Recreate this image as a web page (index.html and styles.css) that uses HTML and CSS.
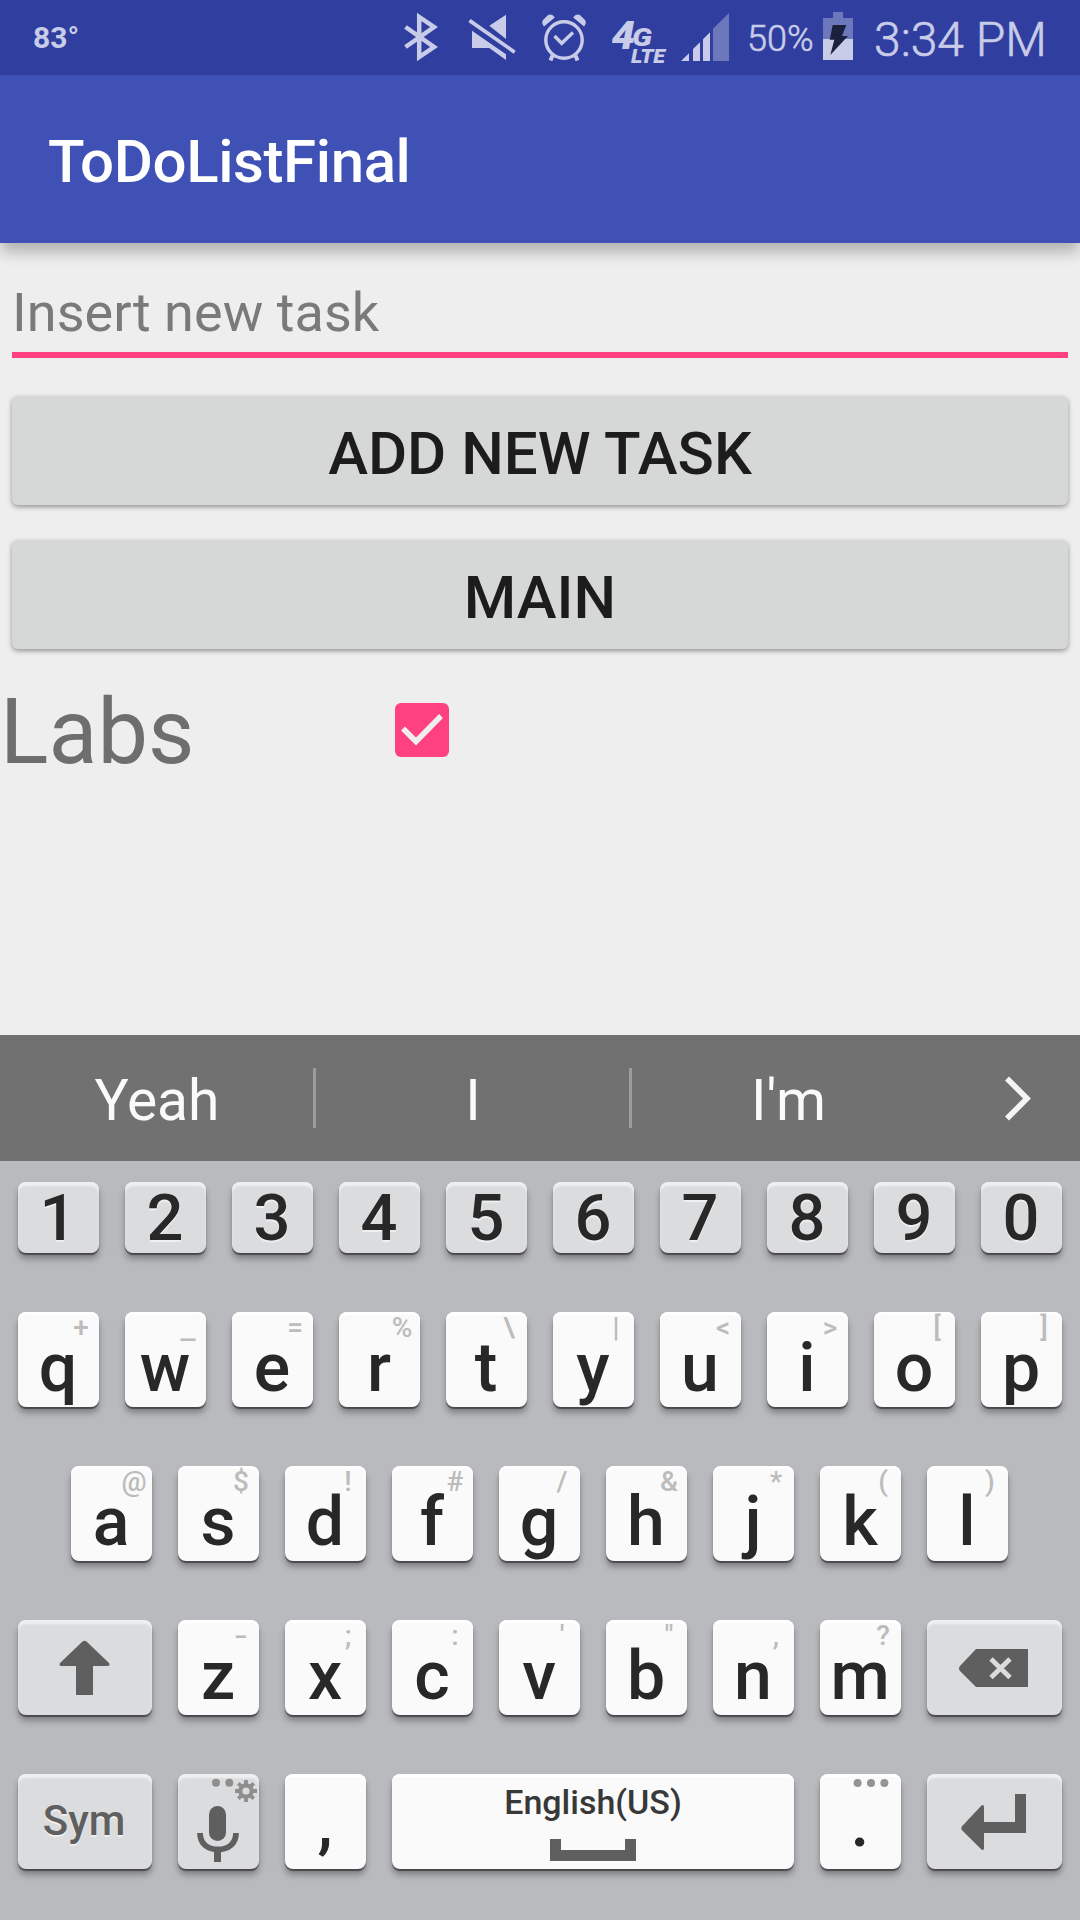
FILE: index.html
```html
<!DOCTYPE html>
<html lang="en">
<head>
<meta charset="utf-8">
<title>ToDoListFinal</title>
<link rel="stylesheet" href="styles.css">
</head>
<body>
<div class="screen">
  <header class="status">
    <span class="temp">83°</span>
    <svg class="ic-bt" width="36" height="75" viewBox="403 0 36 75"><path d="M405.500 47 434 27 419.200 17V57L434 47 405.500 27" fill="none" stroke="currentColor" stroke-width="4.500"/></svg>
    <svg class="ic-mute" width="48" height="75" viewBox="468 0 48 75"><path fill="currentColor" d="M470.700 19 515.700 50.700 513.700 53.700 468.300 22zM489.300 25.700 506 14.700V39zM472 30.700 506 54.300V60L489.300 48H472z"/></svg>
    <svg class="ic-alarm" width="46" height="75" viewBox="541 0 46 75"><g fill="none" stroke="currentColor"><circle cx="564" cy="40" r="18.200" stroke-width="3.400"/><path d="M554.500 36 561.700 43.300 573 32.500" stroke-width="3.400"/><path d="M552.500 55.500 550.500 60.500M575.500 55.500 577.500 60.500" stroke-width="4"/></g><path fill="currentColor" d="M544 26.500 554.800 17.500Q552 13 547.500 15.500L543 20Q541 23 544 26.500zM584 26.500 573.200 17.500Q576 13 580.500 15.500L585 20Q587 23 584 26.500z"/></svg>
    <svg class="ic-lte" width="56" height="75" viewBox="612 0 56 75" fill="currentColor"><text x="611.500" y="49" class="lte-4" textLength="23.500" lengthAdjust="spacingAndGlyphs">4</text><text x="632" y="45.500" class="lte-g" textLength="20" lengthAdjust="spacingAndGlyphs">G</text><text x="631" y="62.600" class="lte" textLength="34" lengthAdjust="spacingAndGlyphs">LTE</text></svg>
    <svg class="ic-signal" width="49" height="75" viewBox="681 0 49 75" fill="currentColor"><path d="M681 61 689 53.300V61zM693 61V49L700 42.300V61zM703 61V39.300L710 32.300V61z"/><path opacity=".4" d="M713 61V28.700L729 13V61z"/></svg>
    <span class="percent">50%</span>
    <svg class="ic-battery" width="30" height="75" viewBox="823 0 30 75"><path fill="currentColor" opacity=".4" d="M823 18H833V12H843V18H853V39H823z"/><path fill="currentColor" d="M823 39H853V60H823z"/><path fill="#1b203d" d="M832.700 25H846.300L842 36H848L830.300 55 834.300 39.700H829.700z"/></svg>
    <span class="clock">3:34 PM</span>
  </header>
  <div class="appbar"><h1>ToDoListFinal</h1></div>
  <main class="content">
    <div class="field"><span>Insert new task</span></div>
    <button class="btn">ADD NEW TASK</button>
    <button class="btn">MAIN</button>
    <div class="task">
      <span class="task-name">Labs</span>
      <svg width="54" height="54" viewBox="0 0 54 54"><rect width="54" height="54" rx="6" fill="#ff4081"/><path d="M8 25.500 21 38.500 46 13" fill="none" stroke="#eee" stroke-width="5.500"/></svg>
    </div>
  </main>
  <div class="suggest">
    <span>Yeah</span><span>I</span><span>I'm</span>
    <svg width="135" height="126" viewBox="945 1035 135 126"><path d="M1007 1078.500 1027 1098.500 1007 1118.500" fill="none" stroke="#f5f5f5" stroke-width="5.600"/></svg>
  </div>
  <div class="keyboard">
    <div class="row nums">
      <div class="key gray">1</div><div class="key gray">2</div><div class="key gray">3</div><div class="key gray">4</div><div class="key gray">5</div><div class="key gray">6</div><div class="key gray">7</div><div class="key gray">8</div><div class="key gray">9</div><div class="key gray">0</div>
    </div>
    <div class="row">
      <div class="key">q<i>+</i></div><div class="key">w<i class="underscore">_</i></div><div class="key">e<i>=</i></div><div class="key">r<i>%</i></div><div class="key">t<i>\</i></div><div class="key">y<i>|</i></div><div class="key">u<i>&lt;</i></div><div class="key">i<i>&gt;</i></div><div class="key">o<i>[</i></div><div class="key">p<i>]</i></div>
    </div>
    <div class="row home">
      <div class="key">a<i>@</i></div><div class="key">s<i>$</i></div><div class="key">d<i>!</i></div><div class="key">f<i>#</i></div><div class="key">g<i>/</i></div><div class="key">h<i>&amp;</i></div><div class="key">j<i>*</i></div><div class="key">k<i>(</i></div><div class="key">l<i>)</i></div>
    </div>
    <div class="row">
      <div class="key gray wide"><svg width="134" height="95" viewBox="18 1620 134 95"><path fill="#5f5f5f" d="M82.500 1641.500Q84.500 1640 86.500 1641.500L109 1663Q110.500 1666 107.500 1666H93V1695H76V1666H61.500Q58.500 1666 60 1663z"/></svg></div>
      <div class="key">z<i class="dash">-</i></div><div class="key">x<i>;</i></div><div class="key">c<i>:</i></div><div class="key">v<i>'</i></div><div class="key">b<i>"</i></div><div class="key">n<i>,</i></div><div class="key">m<i>?</i></div>
      <div class="key gray wider"><svg width="135" height="95" viewBox="927 1620 135 95"><path fill="#5f5f5f" d="M976 1649H1028V1687H976L960 1671Q958 1668.500 960 1666z"/><path d="M991 1659 1010 1677.500M1010 1659 991 1677.500" stroke="#dbdcde" stroke-width="4.800"/></svg></div>
    </div>
    <div class="row">
      <div class="key gray wide sym">Sym</div>
      <div class="key gray"><svg width="81" height="95" viewBox="178 1774 81 95"><g fill="#8e8e8e"><circle cx="216" cy="1782.700" r="4"/><circle cx="229.300" cy="1782.700" r="4"/></g><g stroke="#8e8e8e" fill="none"><circle cx="246" cy="1791" r="5.700" stroke-width="4.200"/><path stroke-width="3.800" d="M246 1780V1784.500M246 1797.500V1802M235 1791H239.500M252.500 1791H257M238.300 1783.300 241.500 1786.500M250.500 1795.500 253.700 1798.700M253.700 1783.300 250.500 1786.500M241.500 1795.500 238.300 1798.700"/></g><rect x="209" y="1806" width="17" height="35" rx="8.500" fill="#5f5f5f"/><path d="M200 1833C200 1844 208 1849.500 218 1849.500S236 1844 236 1833" fill="none" stroke="#5f5f5f" stroke-width="5.800"/><path d="M214 1850H221V1862H214z" fill="#5f5f5f"/></svg></div>
      <div class="key punct">,</div>
      <div class="key space"><span>English(US)</span><svg width="86" height="22" viewBox="0 0 86 22"><path fill="#5f5f5f" d="M0 0H11V11H75V0H86V22H0z"/></svg></div>
      <div class="key punct">.<svg class="more" width="36" height="10" viewBox="0 0 36 10" fill="#949494"><circle cx="4.600" cy="5" r="4"/><circle cx="18" cy="5" r="4"/><circle cx="31.400" cy="5" r="4"/></svg></div>
      <div class="key gray wider"><svg width="135" height="95" viewBox="927 1774 135 95"><path fill="#5f5f5f" d="M961.800 1826.500 981.500 1805.500Q984 1804 984 1807V1822H1015V1794H1026V1833H984V1848Q984 1851 981.500 1849.500L961.800 1830Q961 1828.200 961.800 1826.500z"/></svg></div>
    </div>
  </div>
</div>
</body>
</html>
```
FILE: styles.css
```css
* { box-sizing: border-box; }
body { margin: 0; font-family: Roboto, "Noto Sans", sans-serif; }
svg { display: block; flex: none; }
.screen { width: 1080px; height: 1920px; display: flex; flex-direction: column; background: #eee; overflow: hidden; }

.status { position: relative; z-index: 1; flex: none; height: 75px; display: flex; background: #303e9f; color: #c9cce8; white-space: nowrap; }
.status span { flex: none; line-height: 75px; }
.temp { width: 403px; padding-left: 33px; font-size: 30px; font-weight: 700; }
.ic-mute { margin-left: 29px; }
.ic-alarm { margin-left: 25px; }
.ic-lte { margin-left: 25px; font-style: italic; font-weight: 900; }
.ic-signal { margin-left: 13px; }
.lte-4 { font-size: 38px; }
.lte-g { font-size: 26px; }
.lte { font-size: 20px; }
.percent { width: 76px; margin-left: 17px; font-size: 36px; font-weight: 300; padding-top: 2px; -webkit-text-stroke: .6px currentColor; }
.clock { margin-left: 21px; font-size: 48px; font-weight: 300; padding-top: 2px; -webkit-text-stroke: .6px currentColor; }

.appbar { flex: none; height: 168px; display: flex; align-items: center; padding: 6px 48px 0; background: #3f51b5; box-shadow: 0 10px 14px -1px rgba(0,0,0,.26); }
.appbar h1 { margin: 0; color: #fff; font-size: 60px; font-weight: 500; line-height: 70px; letter-spacing: -.4px; }

.content { flex: none; height: 792px; }
.field { height: 115px; margin: 0 12px 38px; padding-top: 38px; border-bottom: 6px solid #ff4081; font-size: 54px; line-height: 64px; letter-spacing: .06px; color: #7a7a7a; }
.btn { display: block; width: 1056px; height: 109px; margin: 0 12px 35px; padding: 6px 0 0; border: 0; border-radius: 6px; background: #d6d7d7; box-shadow: 0 2px 5px rgba(0,0,0,.38); font: 500 60px/70px Roboto, sans-serif; color: #1c1c1c; }
.task { display: flex; align-items: center; height: 92px; }
.task-name { width: 395px; padding-top: 5px; font-size: 90px; line-height: 106px; color: #6e6e6e; }

.suggest { flex: none; height: 126px; display: flex; background: #717171; color: #fafafa; font-size: 57px; }
.suggest span { width: 316px; display: flex; align-items: center; justify-content: center; padding: 4px 2px 0 0; background: linear-gradient(#9c9c9c, #9c9c9c) right 33px / 3px 60px no-repeat; }
.suggest span:nth-child(3) { width: 313px; padding-right: 0; background: none; }

.keyboard { flex: none; height: 759px; padding: 21px 18px 0; background: #b9babe; }
.row { display: flex; gap: 26px; margin-bottom: 59px; }
.row:last-child { margin-bottom: 0; }
.home { padding-left: 53px; }
.key { position: relative; width: 81px; height: 95px; flex: none; border-radius: 8px; background: #fafafa; color: #282828; font-size: 68px; font-weight: 500; line-height: 78px; padding: 17px 1px 0 0; text-align: center; box-shadow: inset 0 3px 1px #fff, 0 2px 1px rgba(0,0,0,.45), 0 6px 6px rgba(0,0,0,.3); }
.gray { background: #dbdcde; padding: 0; text-shadow: 0 2px 1px #f0f0f0; box-shadow: inset 0 4px 2px #eeeff0, 0 2px 1px rgba(0,0,0,.45), 0 6px 6px rgba(0,0,0,.3); }
.nums .key { height: 71px; font-size: 65px; line-height: 73px; padding-right: 1px; }
.key i { position: absolute; top: 0; right: 0; width: 36px; font: 500 28px/32px Roboto, sans-serif; color: #bcbcbc; text-align: center; }
.key .dash { transform: scaleX(1.4); }
.key .underscore { top: 1px; transform: scaleX(1.2); }
.wide { width: 134px; }
.wider { width: 135px; }
.sym { font-size: 42px; line-height: 94px; padding-right: 2px; color: #5f5f5f; }
.punct { padding-top: 10px; }
.more { position: absolute; top: 4px; right: 12px; }
.space { width: 402px; display: flex; flex-direction: column; align-items: center; padding: 8px 0 0; font-size: 34px; line-height: 40px; color: #383838; }
.space svg { margin-top: 17px; }
```
